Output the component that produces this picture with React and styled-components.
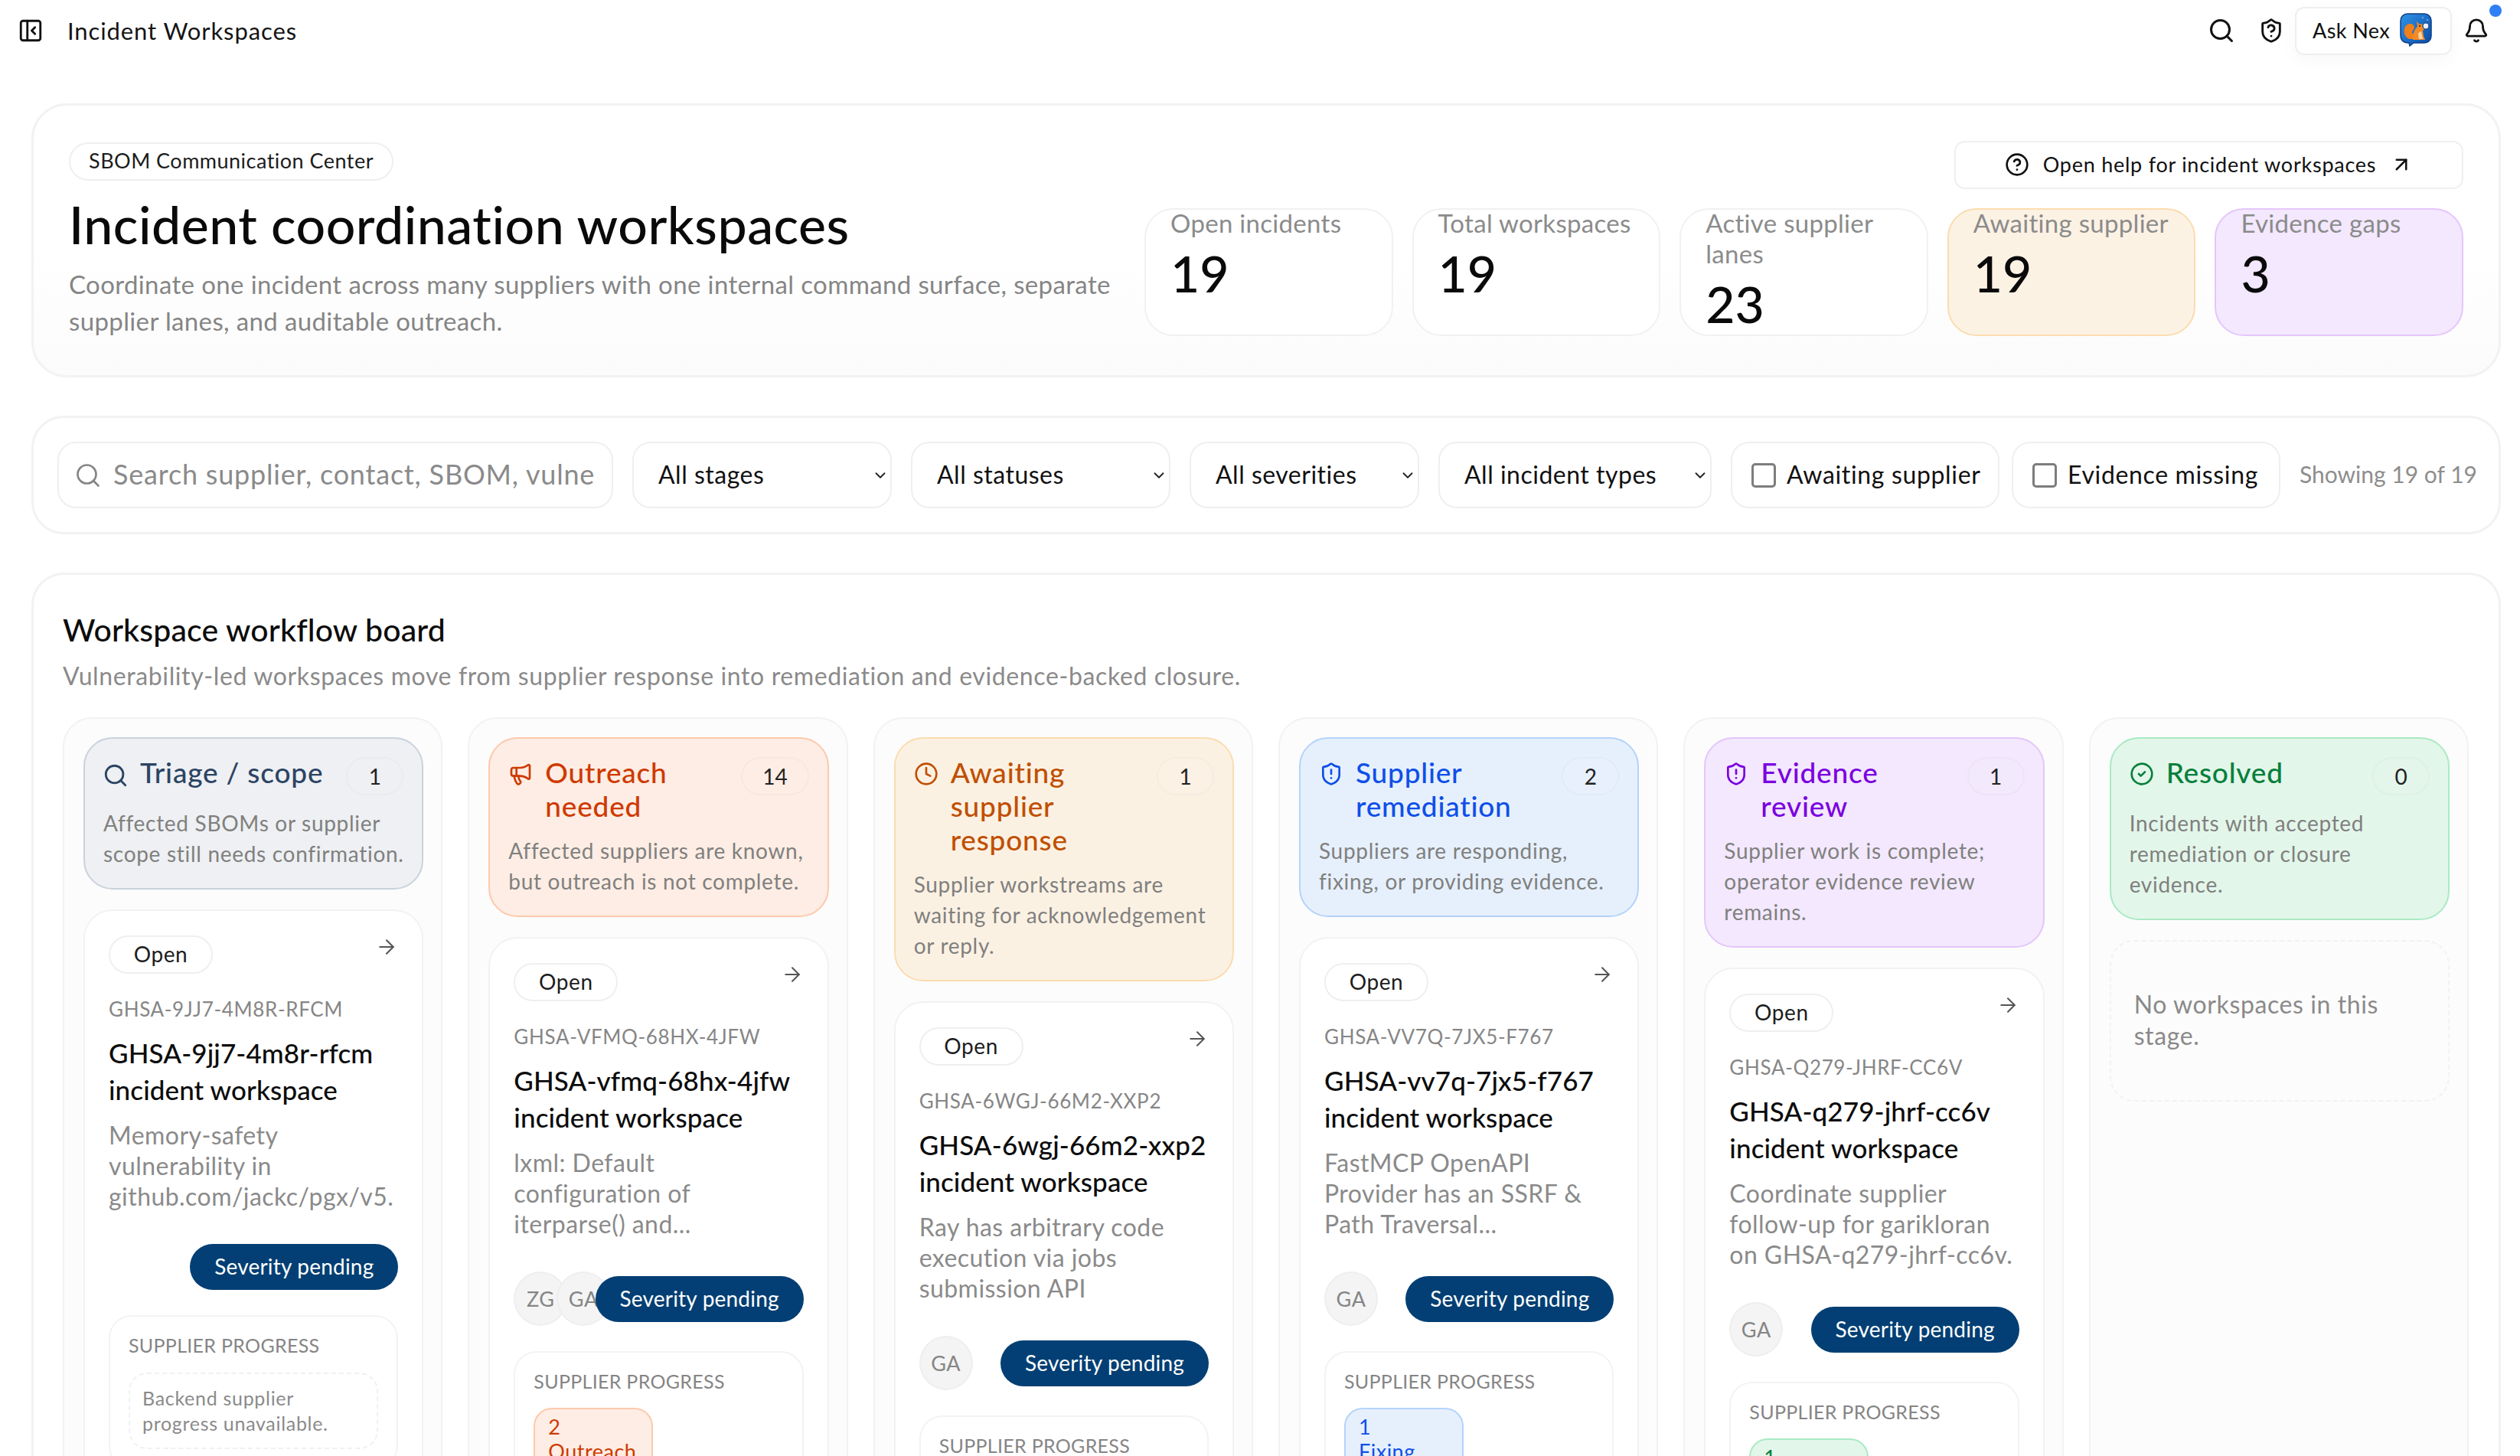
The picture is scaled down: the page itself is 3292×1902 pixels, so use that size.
import React from "react";
import styled, { createGlobalStyle } from "styled-components";
import {
  PanelLeftClose, Search, ShieldQuestion, Bell, CircleHelp, ArrowUpRight, ArrowRight,
  ChevronDown, Megaphone, Clock, ShieldAlert, CircleCheck,
} from "lucide-react";

const FONT = `"Lato", "Noto Sans", "Liberation Sans", sans-serif`;

const Global = createGlobalStyle`
  html, body { margin: 0; padding: 0; height: 100%; overflow: hidden; background: #fff; }
  body { font-family: ${FONT}; color: #111; }
  * { box-sizing: border-box; }
  #root { height: 100%; }
`;

const Shell = styled.div`height: 100vh; overflow: hidden; display: flex; flex-direction: column;`;

const TopBar = styled.header`
  height: 80px; flex: none; display: flex; align-items: center; padding: 0 26px 0 23px;
`;
const PageTitle = styled.div`
  margin-left: 31px; font-size: 31px; letter-spacing: 0.9px; color: #151515; flex: 1;
`;
const TopIcons = styled.div`display: flex; align-items: center;`;
const IconWrap = styled.span`display: inline-flex; margin-right: ${(p) => p.$mr || 0}px; color: #111;`;
const AskButton = styled.div`
  width: 205px; height: 63px; display: flex; align-items: center; justify-content: space-between;
  padding: 0 24px 2px 21px; margin-right: 15px; background: #fff; border: 2px solid #efefef; border-radius: 12px;
  font-size: 27px; letter-spacing: 0.4px; box-shadow: 0 8px 24px rgba(0,0,0,0.03);
`;
const BellWrap = styled.span`position: relative; display: inline-flex; margin-right: 14px;`;
const Dot = styled.span`
  position: absolute; top: -17px; right: -16px; width: 16px; height: 16px; border-radius: 50%; background: #2f7ff5;
`;

const Main = styled.main`
  flex: 1; min-height: 0; padding: 55px 25px 0 41px; display: flex; flex-direction: column; gap: 50px;
`;
const Panel = styled.section`
  border: 3px solid #f2f2f2; border-radius: 46px; background: #fff; flex: none;
`;
const Hero = styled(Panel)`
  height: 358px; padding: 48px 46px 0 46px; display: flex; justify-content: space-between;
  background: linear-gradient(180deg, #fff 55%, #fbfbfb 100%);
`;
const HeroText = styled.div`display: flex; flex-direction: column; align-items: flex-start; flex: none;`;
const Eyebrow = styled.div`
  height: 50px; padding: 0 24px 3px; display: flex; align-items: center; border: 2px solid #efefef; border-radius: 25px;
  font-size: 27px; letter-spacing: 0.48px; color: #1c1c1c;
`;
const H1 = styled.h1`
  margin: 19px 0 0; font-size: 68px; line-height: 76px; font-weight: 500; letter-spacing: 0.5px; color: #0a0a0a; white-space: nowrap;
`;
const Lead = styled.p`
  margin: 16px 0 0; font-size: 33px; line-height: 48px; color: #858585; letter-spacing: 0.37px; white-space: pre;
`;
const HeroRight = styled.div`
  width: 1723px; flex: none; margin-top: -2px; display: flex; flex-direction: column; align-items: flex-end; gap: 25px;
`;
const HelpButton = styled.button`
  width: 665px; height: 63px; background: #fff; border: 2px solid #efefef; border-radius: 14px;
  display: flex; align-items: center; justify-content: center; gap: 18px; font: inherit; font-size: 27px;
  letter-spacing: 0.75px; color: #111; padding: 0 0 2px 0;
`;
const Stats = styled.div`width: 100%; display: grid; grid-template-columns: repeat(5, minmax(0, 1fr)); gap: 25px;`;
const tones = {
  plain: { bg: "#fff", bd: "#f1f1f1" },
  amber: { bg: "#fcf2e4", bd: "#fbdcae" },
  violet: { bg: "#f3e8fd", bd: "#e5c6fb" },
};
const StatCard = styled.div`
  height: 167px; border-radius: 38px; padding: 0 24px 0 32px; border: 2px solid ${(p) => tones[p.$tone].bd};
  background: ${(p) => tones[p.$tone].bg};
`;
const StatLabel = styled.div`margin-top: -3px; font-size: 33px; line-height: 40px; color: #8b8b8b; letter-spacing: 0.3px; white-space: pre-line;`;
const StatValue = styled.div`margin-top: 14px; font-size: 66px; line-height: 64px; font-weight: 500; color: #0a0a0a;`;

const Filters = styled(Panel)`
  height: 155px; border-radius: 42px; padding: 31px 31px; display: flex; align-items: center; gap: 25px;
`;
const fieldBase = `
  height: 87px; flex: none; background: #fff; border: 2px solid #efefef; border-radius: 24px;
`;
const SearchField = styled.label`
  ${fieldBase} width: 726px; display: flex; align-items: center; padding: 0 20px 0 20px; gap: 15px; color: #858585; overflow: hidden;
`;
const SearchInput = styled.input`
  flex: 1; min-width: 0; border: 0; outline: 0; background: transparent; font: inherit; font-size: 36px; letter-spacing: 0.8px;
  padding: 0 0 3px; &::placeholder { color: #8a8a8a; opacity: 1; }
`;
const SelectWrap = styled.div`position: relative; flex: none; width: ${(p) => p.$w}px;`;
const NativeSelect = styled.select`
  ${fieldBase} width: 100%; appearance: none; padding: 0 30px 3px 32px; font: inherit; font-size: 32px; letter-spacing: 0.5px; color: #111; outline: 0;
`;
const Caret = styled.span`position: absolute; right: 4px; top: 33px; display: inline-flex; pointer-events: none; color: #222;`;
const ToggleGroup = styled.div`display: flex; gap: 16px; flex: none;`;
const Toggle = styled.label`
  ${fieldBase} width: 351px; display: flex; align-items: center; gap: 14px; padding-left: 25px; font-size: 32px; letter-spacing: 0.65px; color: #111;
`;
const Check = styled.input.attrs({ type: "checkbox" })`
  appearance: none; width: 32px; height: 32px; margin: 0; border: 3px solid #7d7d7d; border-radius: 5px; background: #fff; flex: none;
`;
const ToggleText = styled.span`margin-top: -3px;`;
const Showing = styled.div`margin-top: -3px; font-size: 30px; letter-spacing: 0; color: #8d8d8d; white-space: nowrap;`;

const Board = styled(Panel)`
  flex: 1 0 auto; border-bottom: 0; border-radius: 42px 42px 0 0; padding: 48px 39px 0 38px;
`;
const BoardTitle = styled.h2`margin: 0; font-size: 41px; line-height: 48px; font-weight: 500; letter-spacing: 0.15px; color: #0c0c0c;`;
const BoardSub = styled.p`margin: 14px 0 0; font-size: 32px; line-height: 44px; color: #8a8a8a; letter-spacing: 0.62px;`;
const Columns = styled.div`
  margin-top: 32px; display: grid; grid-template-columns: repeat(6, minmax(0, 1fr)); gap: 33px; align-items: stretch;
`;
const Column = styled.div`
  border: 2px solid #f2f2f2; border-radius: 38px; background: #fcfcfc; padding: 24px 23px 30px 25px;
  display: flex; flex-direction: column; gap: 26px; min-height: 1100px; min-width: 0;
`;
const stages = {
  triage: { bg: "#eef0f3", bd: "#c9d2dc", fg: "#2c4463" },
  outreach: { bg: "#fdede4", bd: "#fdc9ac", fg: "#cf3a00" },
  awaiting: { bg: "#fbf1e3", bd: "#fbdcae", fg: "#c04f00" },
  remediation: { bg: "#e6f0fc", bd: "#b4d3fb", fg: "#0f4fe8" },
  evidence: { bg: "#f3e8fd", bd: "#e5c6fb", fg: "#7a00e0" },
  resolved: { bg: "#e3f6ea", bd: "#a9eac3", fg: "#06803c" },
};
const StageHead = styled.div`
  border: 2px solid ${(p) => stages[p.$s].bd}; background: ${(p) => stages[p.$s].bg}; border-radius: 38px;
  padding: 24px 24px 25px;
`;
const StageRow = styled.div`display: flex; align-items: flex-start; color: ${(p) => stages[p.$s].fg};`;
const StageIcon = styled.span`
  width: 34px; display: inline-flex; justify-content: center; margin: 6px 15px 0 -1px; flex: none;
`;
const StageName = styled.div`
  flex: 1; margin-top: -2px; font-size: 37px; line-height: 44px; font-weight: 500; letter-spacing: 0.8px; white-space: pre;
`;
const CountBadge = styled.span`
  flex: none; height: 50px; min-width: 75px; padding: 0 26px; display: flex; align-items: center; justify-content: center;
  border: 2px solid rgba(0,0,0,0.025); border-radius: 25px; font-size: 28px; color: #222;
  background: rgba(255,255,255,0.05);
`;
const StageDesc = styled.div`
  margin-top: 16px; font-size: 28px; line-height: 40px; color: #80807e; letter-spacing: 0.7px; white-space: pre;
`;
const Card = styled.article`
  border: 2px solid #f2f2f2; border-radius: 38px; background: #fff; padding: 32px 31px 40px;
`;
const CardTop = styled.div`display: flex; justify-content: space-between; align-items: flex-start; color: #555;`;
const OpenPill = styled.span`
  width: 136px; height: 50px; padding-bottom: 2px; display: flex; align-items: center; justify-content: center; border: 2px solid #efefef; border-radius: 25px;
  font-size: 28px; letter-spacing: 0.6px; color: #1d1d1d;
`;
const CardId = styled.div`
  margin-top: 30px; font-size: 26px; line-height: 32px; color: #868686; letter-spacing: 0.65px; white-space: nowrap;
`;
const CardTitle = styled.h3`
  margin: 17px 0 0; font-size: 35px; line-height: 48px; font-weight: 500; letter-spacing: 0.1px; color: #0c0c0c; white-space: pre;
`;
const CardDesc = styled.p`
  margin: 16px 0 0; font-size: 32px; line-height: 40px; color: #8a8a8a; letter-spacing: 0.45px; white-space: pre;
`;
const CardMeta = styled.div`margin-top: 42px; display: flex; align-items: center; justify-content: space-between;`;
const Avatars = styled.div`flex: 1 1 0; min-width: 0; display: flex;`;
const Avatar = styled.span`
  width: 70px; height: 71px; flex: none; display: flex; align-items: center; justify-content: center; border-radius: 50%;
  background: #f4f4f4; border: 2px solid #eeeeee; font-size: 27px; color: #858585; letter-spacing: 0.6px;
  & + & { margin-left: -14px; }
`;
const SeverityPill = styled.span`
  flex: none; position: relative; width: 272px; height: 60px; border-radius: 30px; background: #033f74; color: #fff;
  display: flex; align-items: center; justify-content: center; font-size: 28px; letter-spacing: 0.2px; padding-bottom: 2px;
`;
const Progress = styled.div`
  margin-top: 33px; border: 2px solid #f3f3f3; border-radius: 30px; padding: 21px 24px 24px; background: #fff;
`;
const ProgressLabel = styled.div`font-size: 25px; line-height: 32px; color: #858585; letter-spacing: 0.3px; white-space: nowrap;`;
const ProgressNote = styled.div`
  margin-top: 20px; border: 2px dashed #f1f1f1; border-radius: 24px; padding: 15px 16px 15px; font-size: 25px; line-height: 33px; color: #8a8a8a; letter-spacing: 0.7px; white-space: pre;
`;
const Chip = styled.div`
  margin-top: 19px; width: 156px; padding: 7px 17px 9px; border: 2px solid ${(p) => stages[p.$s].bd}; background: ${(p) => stages[p.$s].bg};
  color: ${(p) => stages[p.$s].fg}; border-radius: 24px; font-size: 27px; line-height: 32px; letter-spacing: 0.5px;
`;
const EmptyStage = styled.div`
  height: 211px; border: 2px dashed #f2f2f2; border-radius: 32px; padding: 61px 30px; font-size: 32px; line-height: 41px; color: #8a8a8a; letter-spacing: 0.6px; white-space: pre;
`;

const NexLogo = () => (
  <svg width="42" height="44" viewBox="0 0 42 44" aria-hidden="true">
    <defs>
      <linearGradient id="nexBg" x1="0" y1="0" x2="1" y2="1">
        <stop offset="0" stopColor="#2f93e8" />
        <stop offset="1" stopColor="#0b4aa4" />
      </linearGradient>
    </defs>
    <path d="M10 1h22a9 9 0 0 1 9 9v20a9 9 0 0 1-9 9H18l-5 4-1-4h-2a9 9 0 0 1-9-9V10a9 9 0 0 1 9-9z" fill="url(#nexBg)" stroke="#0d3f86" strokeWidth="1.5" />
    <path d="M12 34c-6-3-8-10-5-16 2-4 7-5 10-3 3 2 2 6 0 8-2 3 0 5 3 5v6z" fill="#f07f1c" />
    <path d="M17 35c-1-6 2-14 6-17l-1-7 4 4 3-1 1 3 3 3-3 3 1 7 2 5z" fill="#f58a25" />
    <path d="M24 27c1-2 3-3 4-3l2 10h-5z" fill="#fbd7a6" />
    <circle cx="34" cy="17" r="4" fill="#e8f2ff" stroke="#123c7c" strokeWidth="1.2" />
    <circle cx="26" cy="17" r="1" fill="#221008" />
    <circle cx="30" cy="6" r="1" fill="#7fb6ee" />
    <circle cx="36" cy="9" r="1" fill="#7fb6ee" />
  </svg>
);

const severity = "Severity pending";
const columns = [
  {
    s: "triage", Icon: Search, iconSize: 36, name: "Triage / scope", count: 1,
    desc: "Affected SBOMs or supplier\nscope still needs confirmation.",
    card: {
      id: "GHSA-9JJ7-4M8R-RFCM", title: "GHSA-9jj7-4m8r-rfcm\nincident workspace",
      desc: "Memory-safety\nvulnerability in\ngithub.com/jackc/pgx/v5.", people: [],
      note: "Backend supplier\nprogress unavailable.",
    },
  },
  {
    s: "outreach", Icon: Megaphone, iconSize: 32, name: "Outreach\nneeded", count: 14,
    desc: "Affected suppliers are known,\nbut outreach is not complete.",
    card: {
      id: "GHSA-VFMQ-68HX-4JFW", title: "GHSA-vfmq-68hx-4jfw\nincident workspace",
      desc: "lxml: Default\nconfiguration of\niterparse() and...", people: ["ZG", "GA"],
      chip: { s: "outreach", n: 2, t: "Outreach" },
    },
  },
  {
    s: "awaiting", Icon: Clock, iconSize: 32, name: "Awaiting\nsupplier\nresponse", count: 1,
    desc: "Supplier workstreams are\nwaiting for acknowledgement\nor reply.",
    card: {
      id: "GHSA-6WGJ-66M2-XXP2", title: "GHSA-6wgj-66m2-xxp2\nincident workspace",
      desc: "Ray has arbitrary code\nexecution via jobs\nsubmission API", people: ["GA"],
      chip: { s: "awaiting", n: 1, t: "Awaiting" },
    },
  },
  {
    s: "remediation", Icon: ShieldAlert, iconSize: 32, name: "Supplier\nremediation", count: 2,
    desc: "Suppliers are responding,\nfixing, or providing evidence.",
    card: {
      id: "GHSA-VV7Q-7JX5-F767", title: "GHSA-vv7q-7jx5-f767\nincident workspace",
      desc: "FastMCP OpenAPI\nProvider has an SSRF &\nPath Traversal...", people: ["GA"],
      chip: { s: "remediation", n: 1, t: "Fixing" },
    },
  },
  {
    s: "evidence", Icon: ShieldAlert, iconSize: 32, name: "Evidence\nreview", count: 1,
    desc: "Supplier work is complete;\noperator evidence review\nremains.",
    card: {
      id: "GHSA-Q279-JHRF-CC6V", title: "GHSA-q279-jhrf-cc6v\nincident workspace",
      desc: "Coordinate supplier\nfollow-up for garikloran\non GHSA-q279-jhrf-cc6v.", people: ["GA"],
      chip: { s: "resolved", n: 1, t: "Resolved" },
    },
  },
  {
    s: "resolved", Icon: CircleCheck, iconSize: 32, name: "Resolved", count: 0,
    desc: "Incidents with accepted\nremediation or closure\nevidence.",
    empty: "No workspaces in this\nstage.",
  },
];

const stats = [
  { label: "Open incidents", value: 19, tone: "plain" },
  { label: "Total workspaces", value: 19, tone: "plain" },
  { label: "Active supplier\nlanes", value: 23, tone: "plain" },
  { label: "Awaiting supplier", value: 19, tone: "amber" },
  { label: "Evidence gaps", value: 3, tone: "violet" },
];

const selects = [
  { w: 339, label: "All stages" },
  { w: 339, label: "All statuses" },
  { w: 300, label: "All severities" },
  { w: 357, label: "All incident types" },
];

function WorkspaceCard({ card }) {
  return (
    <Card>
      <CardTop>
        <OpenPill>Open</OpenPill>
        <ArrowRight size={30} strokeWidth={1.6} />
      </CardTop>
      <CardId>{card.id}</CardId>
      <CardTitle>{card.title}</CardTitle>
      <CardDesc>{card.desc}</CardDesc>
      <CardMeta>
        <Avatars>{card.people.map((p) => <Avatar key={p}>{p}</Avatar>)}</Avatars>
        <SeverityPill>{severity}</SeverityPill>
      </CardMeta>
      <Progress>
        <ProgressLabel>SUPPLIER PROGRESS</ProgressLabel>
        {card.note && <ProgressNote>{card.note}</ProgressNote>}
        {card.chip && (
          <Chip $s={card.chip.s}>{card.chip.n}<br />{card.chip.t}</Chip>
        )}
      </Progress>
    </Card>
  );
}

export default function App() {
  return (
    <Shell>
      <Global />
      <TopBar>
        <PanelLeftClose size={34} strokeWidth={2} color="#111" />
        <PageTitle>Incident Workspaces</PageTitle>
        <TopIcons>
          <IconWrap $mr={30}><Search size={36} strokeWidth={2} /></IconWrap>
          <IconWrap $mr={14}><ShieldQuestion size={34} strokeWidth={2} /></IconWrap>
          <AskButton>Ask Nex<NexLogo /></AskButton>
          <BellWrap>
            <Bell size={34} strokeWidth={2} />
            <Dot />
          </BellWrap>
        </TopIcons>
      </TopBar>
      <Main>
        <Hero>
          <HeroText>
            <Eyebrow>SBOM Communication Center</Eyebrow>
            <H1>Incident coordination workspaces</H1>
            <Lead>{"Coordinate one incident across many suppliers with one internal command surface, separate\nsupplier lanes, and auditable outreach."}</Lead>
          </HeroText>
          <HeroRight>
            <HelpButton>
              <CircleHelp size={32} strokeWidth={2} />
              Open help for incident workspaces
              <ArrowUpRight size={30} strokeWidth={2} />
            </HelpButton>
            <Stats>
              {stats.map((s) => (
                <StatCard key={s.label} $tone={s.tone}>
                  <StatLabel>{s.label}</StatLabel>
                  <StatValue>{s.value}</StatValue>
                </StatCard>
              ))}
            </Stats>
          </HeroRight>
        </Hero>
        <Filters>
          <SearchField>
            <Search size={36} strokeWidth={1.8} />
            <SearchInput placeholder="Search supplier, contact, SBOM, vulnerability" />
          </SearchField>
          {selects.map((o) => (
            <SelectWrap key={o.label} $w={o.w}>
              <NativeSelect defaultValue={o.label}><option>{o.label}</option></NativeSelect>
              <Caret><ChevronDown size={22} strokeWidth={2} /></Caret>
            </SelectWrap>
          ))}
          <ToggleGroup>
            <Toggle><Check /><ToggleText>Awaiting supplier</ToggleText></Toggle>
            <Toggle><Check /><ToggleText>Evidence missing</ToggleText></Toggle>
          </ToggleGroup>
          <Showing>Showing 19 of 19</Showing>
        </Filters>
        <Board>
          <BoardTitle>Workspace workflow board</BoardTitle>
          <BoardSub>Vulnerability-led workspaces move from supplier response into remediation and evidence-backed closure.</BoardSub>
          <Columns>
            {columns.map((c) => (
              <Column key={c.s}>
                <StageHead $s={c.s}>
                  <StageRow $s={c.s}>
                    <StageIcon><c.Icon size={c.iconSize} strokeWidth={2} /></StageIcon>
                    <StageName>{c.name}</StageName>
                    <CountBadge>{c.count}</CountBadge>
                  </StageRow>
                  <StageDesc>{c.desc}</StageDesc>
                </StageHead>
                {c.card && <WorkspaceCard card={c.card} />}
                {c.empty && <EmptyStage>{c.empty}</EmptyStage>}
              </Column>
            ))}
          </Columns>
        </Board>
      </Main>
    </Shell>
  );
}
